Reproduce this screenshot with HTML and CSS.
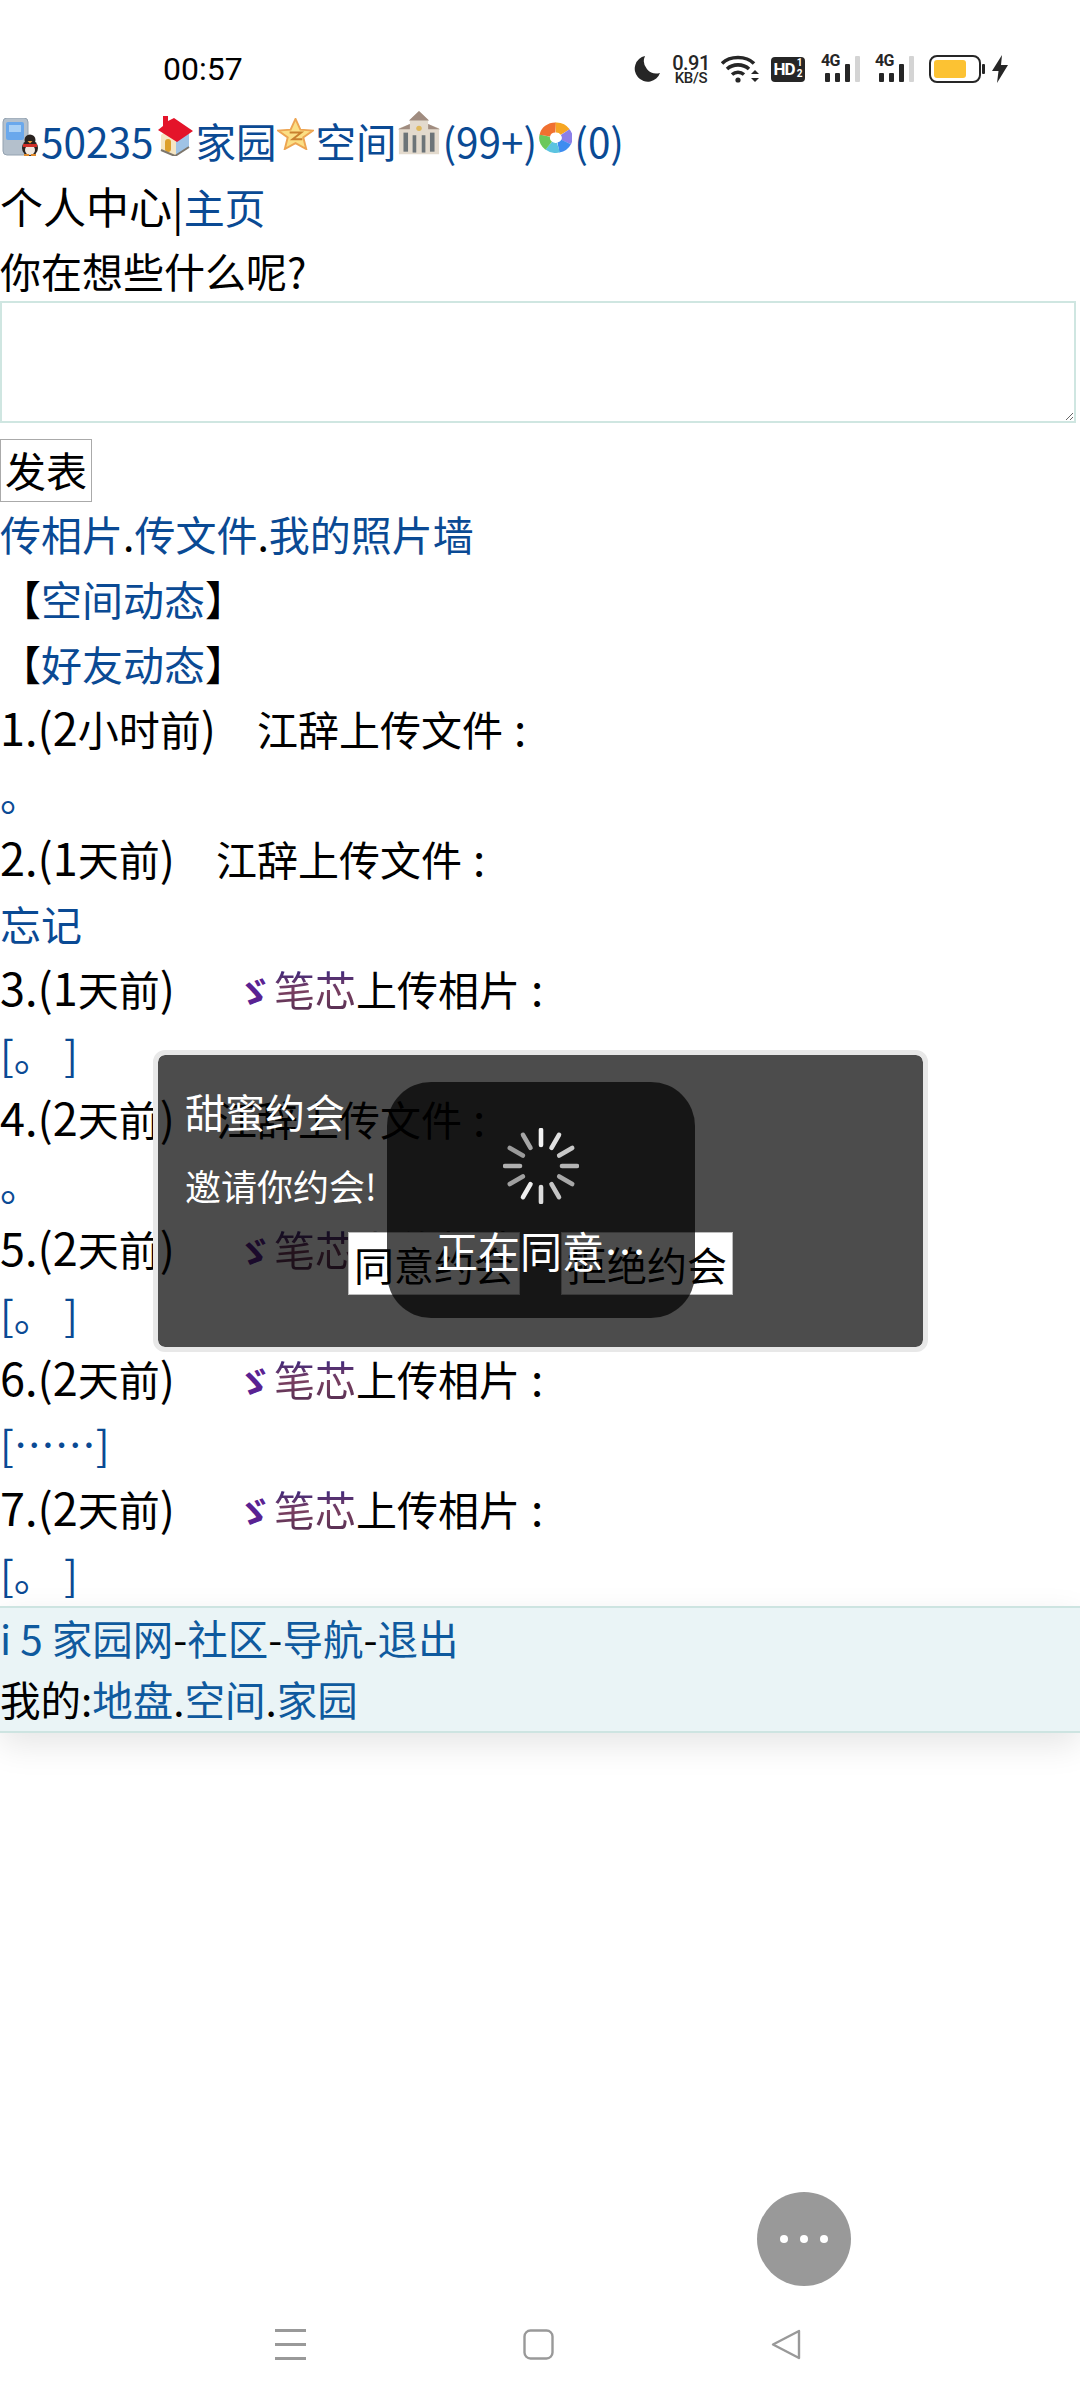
FILE: index.html
```html
<!DOCTYPE html>
<html lang="zh-CN">
<head>
  <meta charset="UTF-8" />
  <meta name="viewport" content="width=device-width, initial-scale=1.0"/>
  <title>空间</title>
  <link rel="stylesheet" href="styles.css">
</head>
<body>

<div class="statusbar">
  <span class="time">00:57</span>
  <div class="status-icons">
    <svg class="ic-moon" width="26" height="26" viewBox="0 0 26 26"><path d="M11 0 A13 13 0 1 0 26 17 A12.5 12.5 0 0 1 11 0Z" fill="#262626"/></svg>
    <div class="speed"><span>0.91</span><span class="speed-unit">KB/S</span></div>
    <svg class="ic-wifi" width="38" height="30" viewBox="0 0 38 30" fill="none" stroke="#262626" stroke-width="3.6">
      <path d="M1 9.5 C9 1.5 25 1.5 33 9.5"/>
      <path d="M6 15 C12 9.5 22 9.5 28 15"/>
      <path d="M11 20.5 C14.5 17.5 19.5 17.5 23 20.5"/>
      <circle cx="17" cy="26" r="2.6" fill="#262626" stroke="none"/>
      <path d="M30 20 L38 20 L34 16Z M30 24 L38 24 L34 28Z" fill="#262626" stroke="none"/>
    </svg>
    <div class="hd"><span>HD</span><span class="hd-num"><i>1</i><i>2</i></span></div>
    <div class="signal">
      <span class="net">4G</span>
      <svg width="39" height="28" viewBox="0 0 39 28"><g fill="#262626"><rect x="4" y="18" width="5" height="9" rx="1"/><rect x="14" y="18" width="5" height="9" rx="1"/><rect x="24" y="9" width="5" height="18" rx="1"/></g><rect x="34" y="1" width="5" height="26" rx="1" fill="#d4d4d4"/></svg>
    </div>
    <div class="signal">
      <span class="net">4G</span>
      <svg width="39" height="28" viewBox="0 0 39 28"><g fill="#262626"><rect x="4" y="18" width="5" height="9" rx="1"/><rect x="14" y="18" width="5" height="9" rx="1"/><rect x="24" y="9" width="5" height="18" rx="1"/></g><rect x="34" y="1" width="5" height="26" rx="1" fill="#d4d4d4"/></svg>
    </div>
    <svg class="ic-battery" width="56" height="28" viewBox="0 0 56 28">
      <rect x="1" y="1" width="50" height="26" rx="7" fill="#fff" stroke="#262626" stroke-width="2"/>
      <rect x="5" y="5" width="32" height="18" rx="3" fill="#fcc233"/>
      <rect x="53" y="9" width="3" height="10" rx="1" fill="#262626"/>
    </svg>
    <svg class="ic-bolt" width="16" height="28" viewBox="0 0 16 28"><path d="M10 0 L0 16 L6.5 16 L5 28 L16 10 L9 10Z" fill="#262626"/></svg>
  </div>
</div>

<main class="page">
  <div class="line top-links">
    <svg class="pic" width="37" height="38" viewBox="0 0 37 38">
      <rect x="1" y="0" width="25" height="37" rx="4" fill="#b4c0cc" stroke="#94a2b0"/>
      <rect x="4" y="4" width="18" height="18" rx="2" fill="#6aa8ec"/>
      <rect x="7" y="7" width="12" height="7" fill="#a9d0f5"/>
      <ellipse cx="28" cy="30" rx="8" ry="8" fill="#2a2320"/>
      <circle cx="28" cy="22" r="5.5" fill="#2a2320"/>
      <ellipse cx="28" cy="32" rx="5" ry="5" fill="#f0e8e0"/>
      <rect x="21" y="26" width="14" height="3" fill="#cf2f28"/>
      <path d="M25.5 23 h5 l-2.5 2.5Z" fill="#eda13a"/>
      <path d="M22 36 h5 v2 h-5Z M29 36 h5 v2 h-5Z" fill="#e08a2a"/>
    </svg><a>50235</a><svg class="pic" width="38" height="40" viewBox="0 0 38 40">
      <path d="M6 19 V34 L20 40 L34 31 V17 L20 8Z" fill="#f5e6c4"/>
      <path d="M21 23 L34 17 V31 L21 39Z" fill="#9fc3e6"/>
      <path d="M8 0 h5 v5 l6 -3 L38 15 L22 26 L3 14 L8 10Z" fill="#e4142a"/>
      <rect x="10" y="23" width="6" height="13" rx="3" fill="#dda02c"/>
      <path d="M6 34 L20 40 L34 31" fill="none" stroke="#7d766c" stroke-width="2"/>
    </svg><a>家园</a><svg class="pic pic-star" width="37" height="32" viewBox="0 0 38 33" preserveAspectRatio="none">
      <path d="M19 1 L24 12 L37 13 L27 20 L30 32 L19 26 L8 32 L11 20 L1 13 L14 12Z" fill="#fbdf85" stroke="#eda552" stroke-width="2"/>
      <path d="M13 15 h12 l-9 7 h10" fill="none" stroke="#c9812f" stroke-width="2"/>
    </svg><a>空间</a><svg class="pic" width="42" height="45" viewBox="0 0 46 52" preserveAspectRatio="none">
      <path d="M23 0 L33 10 L33 15 L45 20 V50 H1 V20 L13 15 V10Z" fill="#e3dacd"/>
      <path d="M23 0 L34 11 H12Z M0 21 L13 15 V21Z M46 21 L33 15 V21Z" fill="#a08c80"/>
      <g fill="#6c7478"><rect x="6" y="25" width="5" height="22"/><rect x="16" y="28" width="4" height="20"/><rect x="26" y="28" width="4" height="20"/><rect x="35" y="25" width="5" height="22"/></g>
      <circle cx="23" cy="20" r="3" fill="#e0b85a"/>
    </svg><a>(99+)</a><svg class="pic pic-shutter" width="33" height="31" viewBox="0 0 34 34" fill="none" stroke-width="11" preserveAspectRatio="none">
      <path d="M17 6 A11 11 0 0 1 27 11" stroke="#f6a623"/>
      <path d="M27 11 A11 11 0 0 1 28 22" stroke="#8b7fe8"/>
      <path d="M28 22 A11 11 0 0 1 20 28" stroke="#3d8cf0"/>
      <path d="M20 28 A11 11 0 0 1 10 26" stroke="#5cc4e0"/>
      <path d="M10 26 A11 11 0 0 1 6 15" stroke="#6ac85c"/>
      <path d="M6 15 A11 11 0 0 1 17 6" stroke="#f07030"/>
    </svg><a>(0)</a>
  </div>
  <div class="line me">个人中心|<a>主页</a></div>
  <div class="line ask">你在想些什么呢?</div>
  <textarea class="post-box"></textarea>
  <div class="post-action"><button class="post-btn">发表</button></div>
  <div class="line"><a>传相片</a>.<a>传文件</a>.<a>我的照片墙</a></div>
  <div class="line">【<a>空间动态</a>】</div>
  <div class="line">【<a>好友动态</a>】</div>

  <div class="line"><span class="num">1.(2</span>小时前<span class="num">)</span>　江辞上传文件<span class="colon">:</span></div>
  <div class="line"><a>。</a></div>
  <div class="line"><span class="num">2.(1</span>天前<span class="num">)</span>　江辞上传文件<span class="colon">:</span></div>
  <div class="line"><a>忘记</a></div>
  <div class="line"><span class="num">3.(1</span>天前<span class="num">)</span>　<span class="mark">ゞ</span><span class="nick">笔芯</span>上传相片<span class="colon">:</span></div>
  <div class="line"><a>[。&nbsp;]</a></div>
  <div class="line"><span class="num">4.(2</span>天前<span class="num">)</span>　江辞上传文件<span class="colon">:</span></div>
  <div class="line"><a>。</a></div>
  <div class="line"><span class="num">5.(2</span>天前<span class="num">)</span>　<span class="mark">ゞ</span><span class="nick">笔芯</span>上传相片<span class="colon">:</span></div>
  <div class="line"><a>[。&nbsp;]</a></div>
  <div class="line"><span class="num">6.(2</span>天前<span class="num">)</span>　<span class="mark">ゞ</span><span class="nick">笔芯</span>上传相片<span class="colon">:</span></div>
  <div class="line"><a>[……]</a></div>
  <div class="line"><span class="num">7.(2</span>天前<span class="num">)</span>　<span class="mark">ゞ</span><span class="nick">笔芯</span>上传相片<span class="colon">:</span></div>
  <div class="line"><a>[。&nbsp;]</a></div>
</main>

<footer class="foot">
  <div class="foot-line"><a>i 5 家园网</a>-<a>社区</a>-<a>导航</a>-<a>退出</a></div>
  <div class="foot-line">我的:<a>地盘</a>.<a>空间</a>.<a>家园</a></div>
</footer>

<div class="spacer"></div>

<div class="navbar">
  <svg width="31" height="31" viewBox="0 0 31 31" fill="#999"><rect y="0" width="31" height="3"/><rect y="14" width="31" height="3"/><rect y="28" width="31" height="3"/></svg>
  <svg width="31" height="31" viewBox="0 0 31 31" fill="none" stroke="#999" stroke-width="2.4"><rect x="1.5" y="1.5" width="28" height="28" rx="6"/></svg>
  <svg width="30" height="31" viewBox="0 0 30 31" fill="none" stroke="#999" stroke-width="2.4" stroke-linejoin="round"><path d="M28 2 L2 15.5 L28 29Z"/></svg>
</div>

<div class="date-dialog">
  <div class="date-title">甜蜜约会</div>
  <div class="date-text">邀请你约会!</div>
  <div class="date-actions">
    <button class="date-btn">同意约会</button>
    <button class="date-btn">拒绝约会</button>
  </div>
</div>

<div class="loading-toast">
  <svg class="spinner" width="76" height="76" viewBox="-38 -38 76 76" stroke-width="4.6" stroke-linecap="round">
    <line y1="-36" y2="-21" stroke="#f2f2f2"/>
    <line y1="-36" y2="-21" stroke="#e0e0e0" transform="rotate(30)"/>
    <line y1="-36" y2="-21" stroke="#c8c8c8" transform="rotate(60)"/>
    <line y1="-36" y2="-21" stroke="#b4b4b4" transform="rotate(90)"/>
    <line y1="-36" y2="-21" stroke="#a8a8a8" transform="rotate(120)"/>
    <line y1="-36" y2="-21" stroke="#c4c4c4" transform="rotate(150)"/>
    <line y1="-36" y2="-21" stroke="#dcdcdc" transform="rotate(180)"/>
    <line y1="-36" y2="-21" stroke="#eeeeee" transform="rotate(210)"/>
    <line y1="-36" y2="-21" stroke="#a0a0a0" transform="rotate(240)"/>
    <line y1="-36" y2="-21" stroke="#b0b0b0" transform="rotate(270)"/>
    <line y1="-36" y2="-21" stroke="#9a9a9a" transform="rotate(300)"/>
    <line y1="-36" y2="-21" stroke="#a6a6a6" transform="rotate(330)"/>
  </svg>
  <div class="loading-text">正在同意…</div>
</div>

<div class="more-btn"><i></i><i></i><i></i></div>

</body>
</html>
```

FILE: styles.css
```css
* {
  box-sizing: border-box;
}
html, body {
  margin: 0;
  padding: 0;
  height: 2400px;
}
body {
  font-family: "Noto Sans CJK SC", "Noto Sans", sans-serif;
  font-size: 41px;
  color: #000;
  background-color: #fff;
  display: flex;
  flex-direction: column;
  overflow: hidden;
}
a {
  color: #0a4a94;
}

/* status bar */
.statusbar {
  height: 108px;
  padding: 54px 72px 0 163px;
  display: flex;
  justify-content: space-between;
  align-items: flex-start;
}
.time {
  font-family: Roboto, sans-serif;
  font-size: 32px;
  line-height: 30px;
  color: #000;
}
.status-icons {
  display: flex;
  align-items: center;
  height: 30px;
}
.ic-moon { margin-right: 13px; }
.ic-wifi { margin-right: 12px; }
.ic-battery { margin-right: 7px; }
.speed {
  width: 36px;
  margin-right: 12px;
  font-family: Roboto, sans-serif;
  font-weight: 500;
  color: #262626;
  font-size: 20px;
  line-height: 17px;
  letter-spacing: -0.5px;
  display: flex;
  flex-direction: column;
  align-items: center;
}
.speed-unit {
  font-size: 15px;
  line-height: 12px;
  letter-spacing: -0.3px;
}
.hd {
  width: 34px;
  height: 25px;
  margin-right: 16px;
  background: #262626;
  color: #fff;
  border-radius: 4px;
  font-family: Roboto, sans-serif;
  font-weight: 700;
  font-size: 17px;
  line-height: 25px;
  letter-spacing: -1px;
  display: flex;
  justify-content: center;
}
.hd-num {
  display: flex;
  flex-direction: column;
  font-size: 10px;
  line-height: 11px;
  margin-left: 2px;
  letter-spacing: 0;
}
.hd-num i {
  font-style: normal;
}
.signal {
  position: relative;
  width: 39px;
  height: 30px;
  margin-right: 15px;
}
.signal svg {
  display: block;
  margin-top: 1px;
}
.net {
  position: absolute;
  left: 0;
  top: 0;
  font-family: Roboto, sans-serif;
  font-weight: 700;
  font-size: 16px;
  line-height: 14px;
  letter-spacing: -0.6px;
  color: #262626;
}

/* page */
.line {
  line-height: 65px;
  height: 65px;
  white-space: nowrap;
}
.top-links {
  display: flex;
  align-items: center;
  font-size: 40.5px;
}
.pic {
  flex: none;
  align-self: flex-end;
  margin: 0 2px 17px;
}
.pic-star {
  margin: 0 1px 23px;
}
.pic-shutter {
  margin-bottom: 20px;
}
.me {
  font-size: 43px;
}
.me a {
  font-size: 41px;
}
.ask {
  height: 63px;
}
.num {
  font-size: 45px;
  line-height: 1;
}
.colon {
  font-size: 44px;
  line-height: 1;
  margin-left: 11px;
}
.post-box {
  display: block;
  width: 1076px;
  height: 122px;
  border: 2px solid #cfe6e1;
  background: #fff;
  margin: 0;
}
.post-action {
  height: 78px;
  padding-top: 16px;
}
.post-btn {
  display: block;
  width: 92px;
  height: 63px;
  padding: 0 0 4px;
  background: #fff;
  border: 1px solid #aaa;
  font-family: inherit;
  font-size: 41px;
  line-height: 56px;
  color: #000;
}
.mark {
  display: inline-block;
  width: 58px;
  padding-right: 2px;
  text-align: right;
  color: #5a2292;
  font-weight: 700;
  font-size: 36px;
  line-height: 40px;
}
.nick {
  background: linear-gradient(#1c1a8c, #7a4060 55%, #4a2a50);
  -webkit-background-clip: text;
  background-clip: text;
  color: transparent;
}

/* footer */
.foot {
  height: 127px;
  font-size: 40.5px;
  background-color: #eaf4f6;
  border-top: 2px solid #cde4e1;
  border-bottom: 2px solid #cde4e1;
  box-shadow: 0 12px 32px rgba(0,0,0,0.1);
}
.foot-line {
  height: 61px;
  line-height: 60px;
}
.foot a {
  color: #0f5a9e;
}
.spacer {
  flex: 1;
}
.navbar {
  height: 71px;
  padding: 0 279px 40px 275px;
  display: flex;
  justify-content: space-between;
  align-items: flex-end;
}

/* dialog */
.date-dialog {
  position: absolute;
  left: 153px;
  top: 1050px;
  width: 775px;
  height: 302px;
  padding: 28px 30px 0 27px;
  background: rgba(0,0,0,0.7);
  border: 5px solid #e8e8e8;
  border-radius: 12px;
  background-clip: padding-box;
  color: #fff;
}
.date-title {
  font-size: 40px;
  line-height: 56px;
}
.date-text {
  font-size: 36px;
  line-height: 50px;
  margin-top: 21px;
}
.date-actions {
  position: absolute;
  left: 190px;
  top: 177px;
  display: flex;
  gap: 41px;
}
.date-btn {
  width: 172px;
  height: 63px;
  padding: 0;
  background: #fff;
  border: 1px solid #bbb;
  font-family: inherit;
  font-size: 40px;
  color: #000;
}
.loading-toast {
  position: absolute;
  left: 387px;
  top: 1082px;
  width: 308px;
  height: 236px;
  background: rgba(0,0,0,0.7);
  border-radius: 44px;
  color: #fff;
  text-align: center;
  padding-top: 46px;
}
.spinner {
  display: block;
  margin: 0 auto;
}
.loading-text {
  font-size: 42px;
  line-height: 56px;
  margin-top: 18px;
}

/* floating button */
.more-btn {
  position: absolute;
  left: 757px;
  top: 2192px;
  width: 94px;
  height: 94px;
  border-radius: 50%;
  background: #999;
  display: flex;
  justify-content: center;
  align-items: center;
  gap: 12px;
}
.more-btn i {
  width: 8px;
  height: 8px;
  border-radius: 50%;
  background: #fff;
}
```
